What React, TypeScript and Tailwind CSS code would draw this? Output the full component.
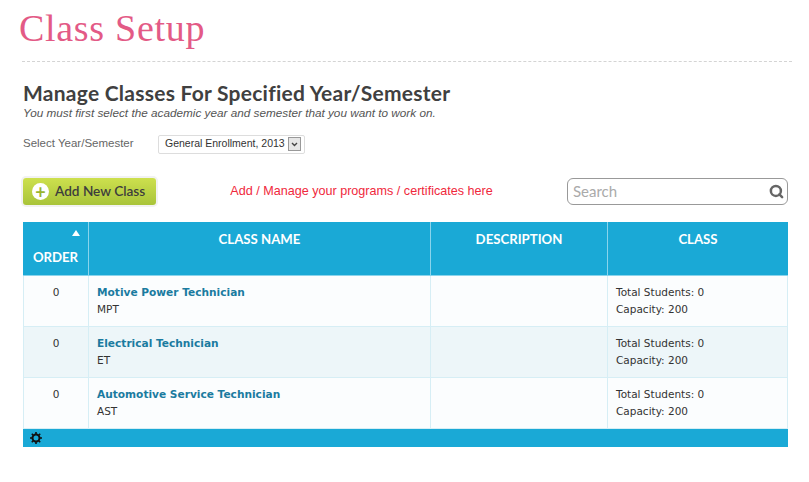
import { Search } from "lucide-react";

const rows = [
  { order: 0, name: "Motive Power Technician", code: "MPT", bg: "bg-[#fbfdfe]" },
  { order: 0, name: "Electrical Technician", code: "ET", bg: "bg-[#edf6f9]" },
  { order: 0, name: "Automotive Service Technician", code: "AST", bg: "bg-[#fbfdfe]" },
];

function Gear() {
  return (
    <svg width="12" height="12" viewBox="0 0 12 12" className="text-[#111]">
      <circle cx="6" cy="6" r="3.5" fill="none" stroke="currentColor" strokeWidth="2" />
      <path d="M6 0v2M6 10v2M0 6h2M10 6h2M1.8 1.8l1.4 1.4M8.8 8.8l1.4 1.4M1.8 10.2l1.4-1.4M8.8 3.2l1.4-1.4" stroke="currentColor" strokeWidth="1.6" />
    </svg>
  );
}

export default function App() {
  return (
    <div className="w-[809px] h-[482px] bg-white overflow-hidden font-['Liberation_Sans',sans-serif]">
      <div className="h-[62px] ml-[22px] mr-[17px] border-b border-dashed border-[#d4d4d4]">
        <h1 className="-ml-[3px] pt-[6px] text-[38px] leading-[44px] tracking-[0.7px] font-['Liberation_Serif',serif] text-[#e35a86]">Class Setup</h1>
      </div>

      <div className="pl-[23px] pr-[21px]">
        <h2 className="mt-[19px] text-[21px] leading-[24px] tracking-[0.25px] font-bold text-[#404040] font-['Lato',sans-serif]">Manage Classes For Specified Year/Semester</h2>
        <p className="text-[11.75px] leading-[14px] mt-[1px] italic text-[#555]">You must first select the academic year and semester that you want to work on.</p>

        <div className="mt-[14px] flex items-center h-[20px]">
          <span className="w-[135px] text-[11.5px] text-[#666]">Select Year/Semester</span>
          <div className="w-[147px] h-[19px] flex items-center justify-between pl-[6px] pr-[3px] border border-[#ddd] rounded-[2px] text-[10.5px] text-[#333]">
            <span>General Enrollment, 2013</span>
            <span className="w-[13px] h-[14px] bg-[#e6e6e6] border border-[#999] flex items-center justify-center">
              <svg width="7" height="5" viewBox="0 0 7 5" fill="none" stroke="#444" strokeWidth="1.4">
                <path d="M1 1l2.5 2.5L6 1" />
              </svg>
            </span>
          </div>
        </div>

        <div className="mt-[24px] flex items-center h-[27px]">
          <button className="w-[133px] h-[27px] rounded-[3px] bg-gradient-to-b from-[#cde04e] to-[#a9c43a] ring-2 ring-[#f2f2f2] flex items-center pl-[9px] gap-[6px] text-[13.6px] font-semibold text-[#3d3d3d] font-['Lato',sans-serif]">
            <span className="w-[17px] h-[17px] rounded-full bg-white flex items-center justify-center text-[#9ab52f] text-[18px] leading-none font-bold">+</span>
            Add New Class
          </button>
          <div className="w-[411px] text-center text-[12.6px] text-[#f0283c]">Add / Manage your programs / certificates here</div>
          <div className="ml-auto w-[221px] h-[27px] rounded-[6px] border border-[#999] flex items-center justify-between pl-[5px] pr-[3px]">
            <span className="text-[15px] text-[#aaa] font-['Lato',sans-serif]">Search</span>
            <Search size={15} strokeWidth={4} className="text-[#666]" />
          </div>
        </div>

        <table className="mt-[17px] w-[765px] table-fixed border-separate border-spacing-0">
          <colgroup>
            <col className="w-[66px]" />
            <col className="w-[342px]" />
            <col className="w-[177px]" />
            <col className="w-[180px]" />
          </colgroup>
          <thead>
            <tr className="h-[54px] bg-[#1aa9d6] text-white text-[13.2px] font-bold font-['Lato',sans-serif]">
              <th className="relative align-bottom pb-[7px] border-r border-b border-[#8ad4ec]">
                <span className="absolute right-[8px] top-[8px] w-0 h-0 border-x-[4px] border-x-transparent border-b-[6px] border-b-white" />
                ORDER
              </th>
              <th className="align-top pt-[8px] border-r border-b border-[#8ad4ec]">CLASS NAME</th>
              <th className="align-top pt-[8px] border-r border-b border-[#8ad4ec]">DESCRIPTION</th>
              <th className="align-top pt-[8px] border-b border-[#8ad4ec]">CLASS</th>
            </tr>
          </thead>
          <tbody className="font-['DejaVu_Sans',sans-serif] text-[10.5px] text-[#333]">
            {rows.map((r) => (
              <tr key={r.code} className={`h-[51px] ${r.bg}`}>
                <td className="text-center align-top pt-[9px] border-l border-r border-b border-[#d6eef5]">{r.order}</td>
                <td className="align-top pt-[8px] pl-[8px] border-r border-b border-[#d6eef5] leading-[17px]">
                  <div className="font-bold text-[#1a7ba0] text-[10.6px]">{r.name}</div>
                  <div>{r.code}</div>
                </td>
                <td className="border-r border-b border-[#d6eef5]"></td>
                <td className="align-top pt-[8px] pl-[8px] border-r border-b border-[#d6eef5] leading-[17px]">
                  <div>Total Students: 0</div>
                  <div>Capacity: 200</div>
                </td>
              </tr>
            ))}
          </tbody>
        </table>

        <div className="w-[765px] h-[18px] bg-[#1aa9d6] flex items-center pl-[7px]">
          <Gear />
        </div>
      </div>
    </div>
  );
}
